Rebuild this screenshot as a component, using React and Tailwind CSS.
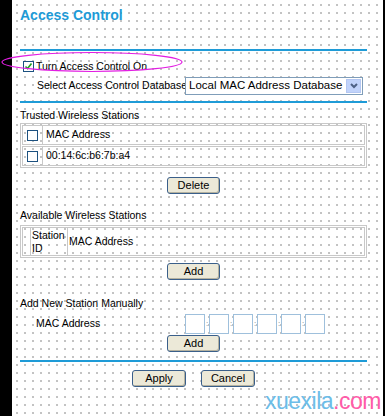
import React from "react";

const dots = "bg-white bg-[radial-gradient(circle,#c0c0c0_0.7px,transparent_0.85px)] bg-[size:8px_8px] bg-[position:1px_1px]";

function Btn({ children, w = "w-[53px]" }) {
  return (
    <button className={`${w} h-[17px] rounded-[3px] border border-[#3a5f8a] bg-[#ece9d8] bg-[radial-gradient(circle,#fff_0.6px,transparent_0.7px)] bg-[size:2px_2px] text-[11px] leading-[15px] text-black shadow-[inset_-1px_-1px_0_#b5b2a0]`}>
      {children}
    </button>
  );
}

function Cb({ checked }) {
  return (
    <span className="inline-flex shrink-0 w-[11px] h-[11px] border border-[#1c5180] bg-white items-center justify-center">
      {checked && (
        <svg width="9" height="9" viewBox="0 0 9 9">
          <path d="M1.5 4.5 L3.5 6.5 L7.5 1.5" stroke="#21a121" strokeWidth="1.6" fill="none" />
        </svg>
      )}
    </span>
  );
}

export default function App() {
  return (
    <div className="w-[385px] h-[416px] bg-black flex" style={{ fontFamily: '"Liberation Sans", Arial, sans-serif' }}>
      <div className={`ml-[12px] w-[371px] h-[416px] relative ${dots} text-[10.5px] text-black whitespace-nowrap`}>
        <div className="pl-[8px] pt-[6px] text-[14px] font-bold text-[#1e9bd7] leading-[18px]">Access Control</div>
        <div className="mt-[25px] ml-[8px] mr-[16px] h-[2px] bg-[#1e9bd7]" />
        <div className="pl-[11px] mt-[9px] flex items-center gap-[2px] leading-[13px]">
          <Cb checked />
          <span>Turn Access Control On</span>
        </div>
        <div className="flex items-center mt-[4px] pl-[25px]">
          <span className="w-[148px]">Select Access Control Database</span>
          <div className="w-[178px] h-[18px] border border-[#7f9db9] bg-white flex items-center justify-between pl-[3px] pr-[1px]">
            <span className="text-[11.5px]">Local MAC Address Database</span>
            <span className="w-[15px] h-[14px] bg-[#c1d3fb] border border-[#b4c7f2] flex items-center justify-center">
              <svg width="8" height="6" viewBox="0 0 8 6"><path d="M1 1 L4 4 L7 1" stroke="#4d6185" strokeWidth="2" fill="none" /></svg>
            </span>
          </div>
        </div>
        <div className="mt-[6px] ml-[8px] mr-[16px] h-[2px] bg-[#1e9bd7]" />

        <div className="pl-[8px] mt-[6px] leading-[13px]">Trusted Wireless Stations</div>
        <div className="ml-[8px] mr-[16px] mt-[1px] border border-[#c8c8c8] p-[1px]">
          <div className="flex h-[20px] border border-[#c8c8c8]">
            <div className="w-[20px] flex items-center justify-center border-r border-[#c8c8c8]"><Cb /></div>
            <div className="pl-[3px] flex items-center">MAC Address</div>
          </div>
          <div className="flex h-[20px] border border-[#c8c8c8] mt-[1px]">
            <div className="w-[20px] flex items-center justify-center border-r border-[#c8c8c8]"><Cb /></div>
            <div className="pl-[3px] flex items-center">00:14:6c:b6:7b:a4</div>
          </div>
        </div>
        <div className="flex justify-center mt-[9px] ml-[8px] mr-[16px]"><Btn>Delete</Btn></div>

        <div className="pl-[8px] mt-[15px] leading-[13px]">Available Wireless Stations</div>
        <div className="ml-[8px] mr-[16px] mt-[3px] border border-[#c8c8c8] p-[1px]">
          <div className="flex h-[29px] border border-[#c8c8c8]">
            <div className="w-[8px] border-r border-[#c8c8c8]" />
            <div className="w-[37px] pl-[1px] border-r border-[#c8c8c8] leading-[13px] pt-[1px]">Station<br />ID</div>
            <div className="pl-[1px] flex items-center">MAC Address</div>
          </div>
        </div>
        <div className="flex justify-center mt-[5px] ml-[8px] mr-[16px]"><Btn>Add</Btn></div>

        <div className="pl-[8px] mt-[17px] leading-[13px]">Add New Station Manually</div>
        <div className="flex items-center mt-[4px]">
          <span className="pl-[24px] w-[173px]">MAC Address</span>
          <div className="flex items-center">
            {[0, 1, 2, 3, 4, 5].map((i) => (
              <React.Fragment key={i}>
                {i > 0 && <span className="w-[4px] text-[8px] leading-[8px] text-[#777] text-center">:</span>}
                <span className="w-[20px] h-[20px] border border-[#9fc0dc] bg-white" />
              </React.Fragment>
            ))}
          </div>
        </div>
        <div className="flex justify-center mt-[1px] ml-[8px] mr-[16px]"><Btn>Add</Btn></div>

        <div className="mt-[8px] ml-[8px] mr-[16px] h-[2px] bg-[#1e9bd7]" />
        <div className="flex justify-center gap-[15px] mt-[8px] ml-[8px] mr-[16px]">
          <Btn w="w-[54px]">Apply</Btn>
          <Btn w="w-[54px]">Cancel</Btn>
        </div>

        <div className="absolute left-[253px] top-[389px] text-[23px] leading-[24px] tracking-[-0.5px]">
          <span className="text-[#6cbde8]">xuexila</span><span className="text-[#ff5ca8]">.com</span>
        </div>

        <svg className="absolute left-[-12px] top-[51px] pointer-events-none" width="185" height="24" viewBox="0 0 185 24">
          <ellipse cx="92" cy="11" rx="90" ry="9.5" fill="none" stroke="#e21ee2" strokeWidth="1.2" />
        </svg>
      </div>
    </div>
  );
}
